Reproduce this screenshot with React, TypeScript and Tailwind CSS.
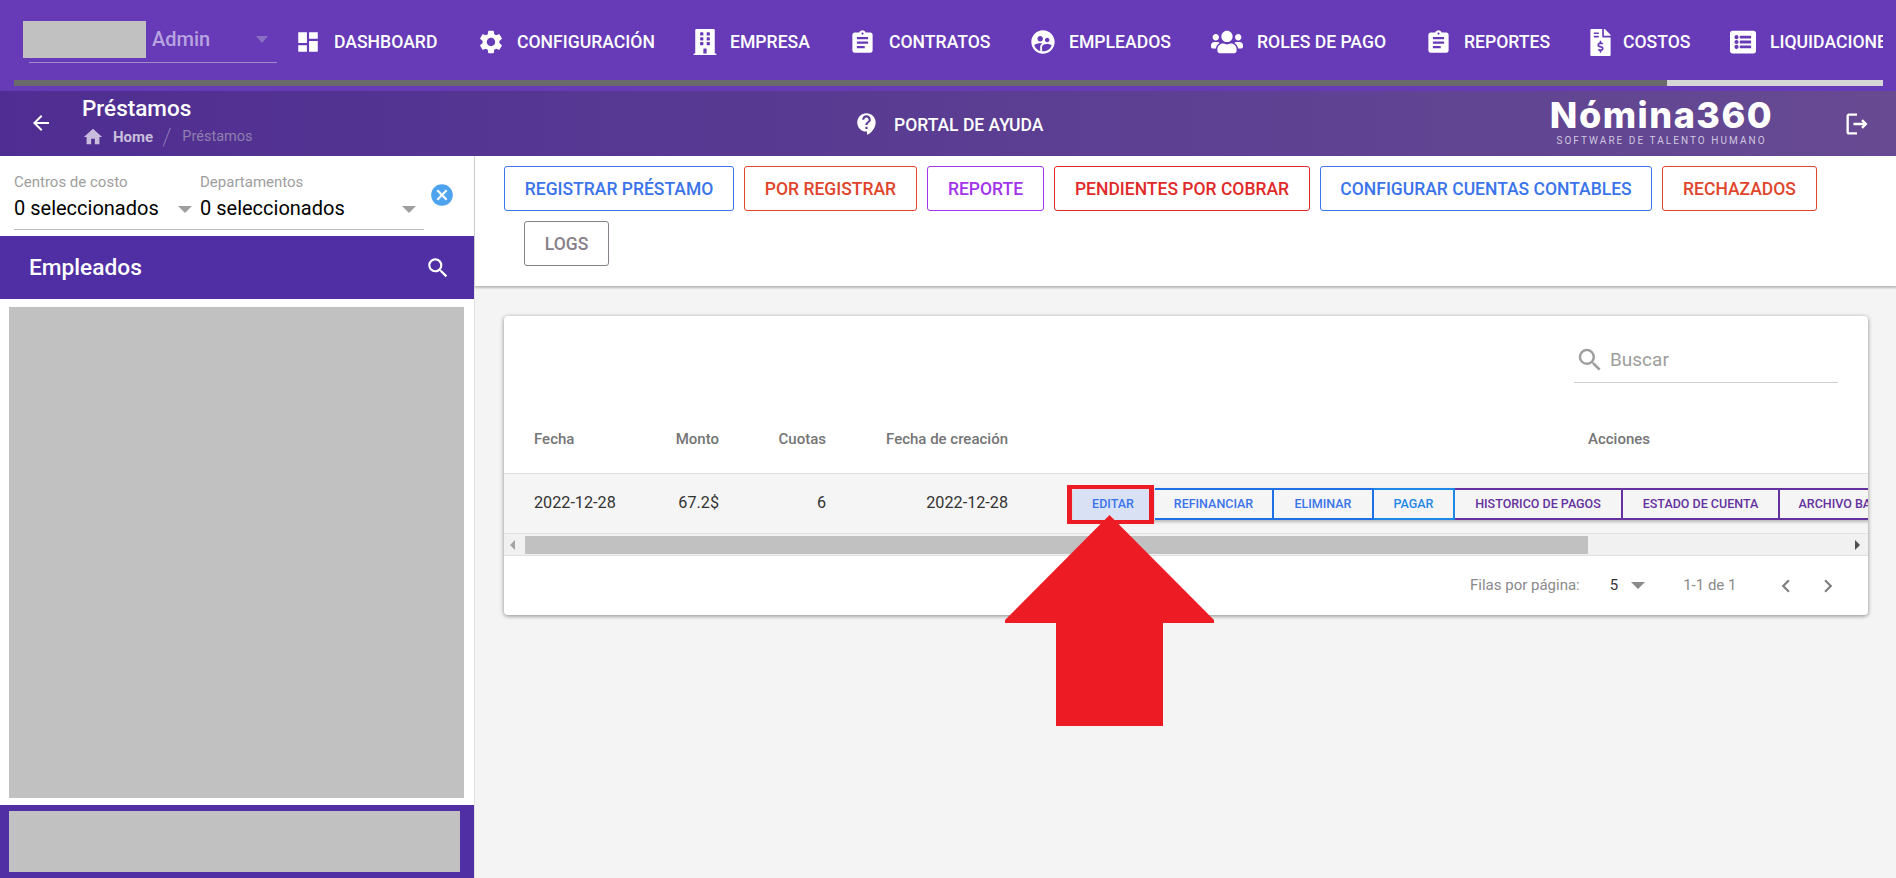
import React from "react";
import {
  MdDashboard,
  MdSettings,
  MdAssignment,
  MdHome,
  MdArrowBack,
  MdCancel,
  MdSearch,
  MdChevronLeft,
  MdChevronRight,
  MdContactSupport,
  MdOutlineLogout,
  MdSupervisedUserCircle,
} from "react-icons/md";
import { FaBuilding, FaUsers, FaFileInvoiceDollar, FaListAlt } from "react-icons/fa";

const roboto = "font-['Roboto',sans-serif]";

// w: ancho total del item, iw: ancho de la columna del icono
const navItems = [
  { label: "DASHBOARD", icon: <MdDashboard size={26} className="-ml-[2px]" />, w: "w-[181px]", iw: "w-[37px] -ml-[1px]" },
  { label: "CONFIGURACIÓN", icon: <MdSettings size={28} className="-ml-[2px]" />, w: "w-[215px]", iw: "w-[38px]" },
  { label: "EMPRESA", icon: <FaBuilding size={26} className="-ml-[2px]" />, w: "w-[157px]", iw: "w-[36px]" },
  { label: "CONTRATOS", icon: <MdAssignment size={27} className="-ml-[2px]" />, w: "w-[180px]", iw: "w-[38px]" },
  { label: "EMPLEADOS", icon: <MdSupervisedUserCircle size={28} className="-ml-[2px]" />, w: "w-[180px]", iw: "w-[38px]" },
  { label: "ROLES DE PAGO", icon: <FaUsers size={32} />, w: "w-[216px]", iw: "w-[46px]" },
  { label: "REPORTES", icon: <MdAssignment size={27} className="-ml-[2px]" />, w: "w-[163px]", iw: "w-[37px]" },
  { label: "COSTOS", icon: <FaFileInvoiceDollar size={27} className="-ml-[3px]" />, w: "w-[140px]", iw: "w-[33px]" },
  { label: "LIQUIDACIONES", icon: <FaListAlt size={26} />, w: "w-[180px]", iw: "w-[40px]" },
];

const topButtons = [
  { label: "REGISTRAR PRÉSTAMO", cls: "w-[230px] border-[#3b74ea] text-[#3b74ea]" },
  { label: "POR REGISTRAR", cls: "w-[173px] border-[#e0452c] text-[#e0452c]" },
  { label: "REPORTE", cls: "w-[117px] border-[#a235ea] text-[#a235ea]" },
  { label: "PENDIENTES POR COBRAR", cls: "w-[256px] border-[#e02a2a] text-[#e02a2a]" },
  { label: "CONFIGURAR CUENTAS CONTABLES", cls: "w-[332px] border-[#3b74ea] text-[#3b74ea]" },
  { label: "RECHAZADOS", cls: "w-[155px] border-[#e0452c] text-[#e0452c]" },
];

const rowButtons = [
  { label: "EDITAR", cls: "w-[82px] bg-[#d9e2f5] border-[#d9e2f5] text-[#3b74ea]" },
  { label: "REFINANCIAR", cls: "w-[119px] border-[#1f6fe5] text-[#3b74ea]" },
  { label: "ELIMINAR", cls: "w-[100px] border-[#1f6fe5] text-[#3b74ea]" },
  { label: "PAGAR", cls: "w-[81px] border-[#1e88e5] text-[#1e88e5]" },
  { label: "HISTORICO DE PAGOS", cls: "w-[168px] border-[#64319f] text-[#64319f]" },
  { label: "ESTADO DE CUENTA", cls: "w-[157px] border-[#64319f] text-[#64319f]" },
  { label: "ARCHIVO BANCARIO", cls: "w-[157px] border-[#64319f] text-[#64319f]" },
];

const App = () => {
  return (
    <div className={`${roboto} relative flex h-[878px] w-[1896px] flex-col overflow-hidden bg-[#f4f4f4]`}>
      {/* barra de navegacion */}
      <div className="flex h-[91px] shrink-0 flex-col bg-[#673ab7]">
        <div className="flex h-[80px] w-[1883px] overflow-hidden">
          <div className="flex w-[298px] shrink-0 flex-col pl-[23px] pt-[21px]">
            <div className="flex h-[37px] items-center">
              <div className="h-[37px] w-[123px] bg-[#c1c1c1]" />
              <span className="mb-[2px] ml-[6px] w-[104px] text-[20px] font-medium text-[#b8a4e0]">Admin</span>
              <span className="h-0 w-0 border-x-[6px] border-t-[7px] border-x-transparent border-t-[#8a70c4]" />
            </div>
            <div className="ml-[6px] mt-[4px] h-px w-[248px] bg-[#a08cc9]" />
          </div>
          {navItems.map((item) => (
            <div key={item.label} className={`${item.w} flex shrink-0 items-center pt-[4px] text-white`}>
              <span className={`${item.iw} flex shrink-0 justify-start [&>svg]:shrink-0`}>{item.icon}</span>
              <span className="text-[17.6px] font-medium whitespace-nowrap">{item.label}</span>
            </div>
          ))}
        </div>
        <div className="ml-[14px] flex h-[6px] w-[1869px] bg-[#6a6a6a]">
          <div className="ml-auto w-[216px] bg-[#d6d6d6]" />
        </div>
      </div>

      {/* cabecera de pagina */}
      <div className="flex h-[65px] shrink-0 items-center bg-gradient-to-r from-[#4f2d92] to-[#674a92] text-white">
        <div className="mb-[2px] flex w-[82px] justify-center">
          <MdArrowBack size={24} />
        </div>
        <div className="w-[772px]">
          <div className="-mt-[4px] text-[22.5px] leading-[26px] font-medium">Préstamos</div>
          <div className="mt-[5px] flex items-center text-[15px] leading-[20px]">
            <MdHome size={22} className="text-[#c7bcdc]" />
            <span className="ml-[9px] font-bold text-[#c8bfdc]">Home</span>
            <span className="ml-[9px] mr-[11px] text-[24px] leading-[20px] font-thin text-[#a99bc4]">/</span>
            <span className="text-[14.5px] text-[#8f7fae]">Préstamos</span>
          </div>
        </div>
        <MdContactSupport size={26} />
        <span className="ml-[14px] pt-[3px] text-[17.5px] font-medium">PORTAL DE AYUDA</span>
        <div className="ml-auto flex items-center pr-[25px]">
          <div className="flex w-[221px] flex-col items-center pb-[6px]">
            <span className="font-['Inter',sans-serif] text-[36px] leading-[40px] font-extrabold tracking-[1.5px] whitespace-nowrap">Nómina360</span>
            <span className="text-[10px] leading-[12px] tracking-[2.05px] text-[#d0c7e0] whitespace-nowrap">SOFTWARE DE TALENTO HUMANO</span>
          </div>
          <MdOutlineLogout size={28} className="ml-[71px]" />
        </div>
      </div>

      <div className="flex min-h-0 flex-1">
        {/* panel de empleados */}
        <div className="flex w-[475px] shrink-0 flex-col border-r border-[#e0e0e0] bg-white">
          <div className="flex h-[80px] shrink-0 pl-[14px] pt-[17px]">
            <div className="flex h-[57px] w-[410px] border-b border-[#bdbdbd]">
              <div className="w-[186px] shrink-0">
                <div className="text-[15px] leading-[18px] text-[#9e9e9e]">Centros de costo</div>
                <div className="flex items-center justify-between pr-[8px] pt-[1px] text-[20px] leading-[32px] text-black">
                  0 seleccionados
                  <span className="mt-[2px] h-0 w-0 border-x-[7px] border-t-[7px] border-x-transparent border-t-[#9e9e9e]" />
                </div>
              </div>
              <div className="flex-1">
                <div className="text-[15px] leading-[18px] text-[#9e9e9e]">Departamentos</div>
                <div className="flex items-center justify-between pr-[8px] pt-[1px] text-[20px] leading-[32px] text-black">
                  0 seleccionados
                  <span className="mt-[2px] h-0 w-0 border-x-[7px] border-t-[7px] border-x-transparent border-t-[#9e9e9e]" />
                </div>
              </div>
            </div>
            <MdCancel size={26} className="ml-[5px] mt-[9px] text-[#4ea3ee]" />
          </div>
          <div className="flex h-[63px] shrink-0 items-center justify-between bg-[#502ea4] pl-[29px] pr-[23px] text-white">
            <span className="pt-[1px] text-[22.7px] font-medium">Empleados</span>
            <MdSearch size={26} />
          </div>
          <div className="flex-1 pb-[7px] pl-[9px] pr-[10px] pt-[8px]">
            <div className="h-full bg-[#c1c1c1]" />
          </div>
          <div className="h-[73px] shrink-0 bg-[#502ea4] pl-[9px] pr-[14px] pt-[6px]">
            <div className="h-[61px] bg-[#c1c1c1]" />
          </div>
        </div>

        {/* contenido */}
        <div className="min-w-0 flex-1">
          <div className="h-[131px] border-b border-[#bdbdbd] bg-white pl-[29px] pt-[10px] shadow-[0_1px_2px_rgba(0,0,0,0.25)]">
            <div className="flex gap-[10px]">
              {topButtons.map((b) => (
                <div
                  key={b.label}
                  className={`${b.cls} flex h-[45px] shrink-0 items-center justify-center rounded-[3px] border pt-[1px] text-[17.5px] font-medium whitespace-nowrap`}
                >
                  {b.label}
                </div>
              ))}
            </div>
            <div className="ml-[20px] mt-[10px] flex h-[45px] w-[85px] items-center justify-center rounded-[3px] border border-[#878089] pt-[1px] text-[17.5px] font-medium text-[#878089]">
              LOGS
            </div>
          </div>

          <div className="ml-[29px] mt-[29px] h-[299px] w-[1364px] overflow-hidden rounded-[4px] bg-white shadow-[0_1px_4px_rgba(0,0,0,0.45)]">
            <div className="flex h-[67px] justify-end pr-[30px] pt-[16px]">
              <div className="flex h-[51px] w-[264px] items-center border-b border-[#cfcfcf] pl-[1px] pt-[6px] text-[#9e9e9e]">
                <MdSearch size={30} />
                <span className="ml-[5px] text-[19px]">Buscar</span>
              </div>
            </div>
            <div className="flex h-[91px] items-center border-b border-[#e0e0e0] pt-[22px] text-[15px] font-medium text-[#757575]">
              <span className="ml-[30px] w-[100px] shrink-0">Fecha</span>
              <span className="w-[85px] shrink-0 text-right">Monto</span>
              <span className="w-[107px] shrink-0 text-right">Cuotas</span>
              <span className="w-[182px] shrink-0 text-right">Fecha de creación</span>
              <span className="ml-[411px] w-[400px] shrink-0 text-center">Acciones</span>
            </div>
            <div className="flex h-[60px] items-center overflow-hidden border-b border-[#e0e0e0] bg-[#f5f5f5] text-[16.2px] text-[#333333]">
              <span className="ml-[30px] w-[100px] shrink-0">2022-12-28</span>
              <span className="w-[85px] shrink-0 text-right">67.2$</span>
              <span className="w-[107px] shrink-0 text-right">6</span>
              <span className="w-[182px] shrink-0 text-right">2022-12-28</span>
              <div className="ml-[65px] mt-[1px] flex shrink-0 shadow-[0_2px_3px_rgba(0,0,0,0.25)]">
                {rowButtons.map((b) => (
                  <div
                    key={b.label}
                    className={`${b.cls} flex h-[32px] shrink-0 items-center justify-center border-y-2 border-r-2 text-[12.5px] font-medium whitespace-nowrap`}
                  >
                    {b.label}
                  </div>
                ))}
              </div>
            </div>
            <div className="flex h-[22px] items-center border-b border-[#e0e0e0] bg-[#f1f1f1]">
              <span className="ml-[6px] h-0 w-0 border-y-[5px] border-r-[5px] border-y-transparent border-r-[#a3a3a3]" />
              <div className="ml-[10px] h-[18px] w-[1063px] bg-[#c1c1c1]" />
              <span className="ml-auto mr-[8px] h-0 w-0 border-y-[5px] border-l-[5px] border-y-transparent border-l-[#505050]" />
            </div>
            <div className="flex h-[58px] items-center pt-[1px] text-[15px] text-[#8a8a8a]">
              <span className="ml-[966px]">Filas por página:</span>
              <span className="ml-[30px] text-[#333333]">5</span>
              <span className="ml-[13px] h-0 w-0 border-x-[7px] border-t-[7px] border-x-transparent border-t-[#8a8a8a]" />
              <span className="ml-[38px]">1-1 de 1</span>
              <MdChevronLeft size={26} className="ml-[37px] text-[#808080]" />
              <MdChevronRight size={26} className="ml-[16px] text-[#808080]" />
            </div>
          </div>
        </div>
      </div>

      {/* marca roja sobre EDITAR */}
      <div className="absolute left-[1067px] top-[485px] h-[39px] w-[87px] border-x-[5px] border-y-[4px] border-[#ed1c24]" />
      <svg className="absolute left-[1000px] top-[510px]" width="220" height="220" viewBox="0 0 220 220">
        <path d="M109.5 5 L214 110 L214 113 L163 113 L163 216 L56 216 L56 113 L5 113 L5 110 Z" fill="#ed1c24" />
      </svg>
    </div>
  );
};

export default App;
